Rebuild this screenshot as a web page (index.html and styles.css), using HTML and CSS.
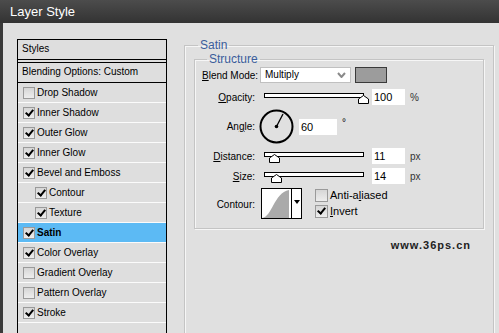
FILE: index.html
```html
<!DOCTYPE html>
<html lang="en">
<head>
    <meta charset="UTF-8">
    <title>Layer Style</title>
    <link rel="stylesheet" href="styles.css">
</head>
<body>
    <div class="window">
        <div class="titlebar">Layer Style</div>

        <div class="content">
            <div class="styles-panel">
                <div class="panel-head">Styles</div>
                <div class="panel-blend">Blending Options: Custom</div>

                <div class="item"><span class="cb"></span>Drop Shadow</div>
                <div class="item"><span class="cb on"></span>Inner Shadow</div>
                <div class="item"><span class="cb on"></span>Outer Glow</div>
                <div class="item"><span class="cb on"></span>Inner Glow</div>
                <div class="item"><span class="cb on"></span>Bevel and Emboss</div>
                <div class="item sub"><span class="cb on"></span>Contour</div>
                <div class="item sub"><span class="cb on"></span>Texture</div>
                <div class="item active"><span class="cb on"></span>Satin</div>
                <div class="item"><span class="cb on"></span>Color Overlay</div>
                <div class="item"><span class="cb"></span>Gradient Overlay</div>
                <div class="item"><span class="cb"></span>Pattern Overlay</div>
                <div class="item"><span class="cb on"></span>Stroke</div>
            </div>

            <fieldset class="group satin">
                <legend>Satin</legend>

                <fieldset class="group structure">
                    <legend>Structure</legend>

                    <div class="row r-blend">
                        <span class="label"><u>B</u>lend Mode:</span>
                        <div class="select">Multiply
                            <svg class="chev" width="9" height="6" viewBox="0 0 9 6"><path d="M1 1 L4.5 5 L8 1" fill="none" stroke="#8a8a8a" stroke-width="2"/></svg>
                        </div>
                        <span class="swatch"></span>
                    </div>

                    <div class="row r-opacity">
                        <span class="label"><u>O</u>pacity:</span>
                        <div class="slider">
                            <div class="track"></div>
                            <svg class="thumb" style="left: 94px" width="11" height="9" viewBox="0 0 11 9"><polygon points="0.5,8.5 0.5,4 5.5,0.5 10.5,4 10.5,8.5" fill="#fff" stroke="#000"/></svg>
                        </div>
                        <span class="field">100</span>
                        <span class="unit">%</span>
                    </div>

                    <div class="row r-angle">
                        <span class="label">An<u>g</u>le:</span>
                        <svg class="dial" width="35" height="35" viewBox="0 0 35 35">
                            <circle cx="17.5" cy="17.5" r="16" fill="none" stroke="#000" stroke-width="2"/>
                            <line x1="17.5" y1="17.5" x2="24" y2="5" stroke="#000" stroke-width="1.3"/>
                            <circle cx="17.5" cy="17.5" r="1.8" fill="#000"/>
                        </svg>
                        <span class="field wide">60</span>
                        <span class="deg">°</span>
                    </div>

                    <div class="row r-dist">
                        <span class="label"><u>D</u>istance:</span>
                        <div class="slider">
                            <div class="track"></div>
                            <svg class="thumb" style="left: 5px" width="11" height="9" viewBox="0 0 11 9"><polygon points="0.5,8.5 0.5,4 5.5,0.5 10.5,4 10.5,8.5" fill="#fff" stroke="#000"/></svg>
                        </div>
                        <span class="field">11</span>
                        <span class="unit">px</span>
                    </div>

                    <div class="row r-size">
                        <span class="label"><u>S</u>ize:</span>
                        <div class="slider">
                            <div class="track"></div>
                            <svg class="thumb" style="left: 7px" width="11" height="9" viewBox="0 0 11 9"><polygon points="0.5,8.5 0.5,4 5.5,0.5 10.5,4 10.5,8.5" fill="#fff" stroke="#000"/></svg>
                        </div>
                        <span class="field">14</span>
                        <span class="unit">px</span>
                    </div>

                    <div class="row r-contour">
                        <span class="label">Contour:</span>
                        <div class="contour">
                            <svg class="curve" width="29" height="29" viewBox="0 0 29 29">
                                <rect width="29" height="29" fill="#fff"/>
                                <path d="M0 29 C 10 28, 12 4, 27 1 L 27 29 Z" fill="#aaa"/>
                            </svg>
                            <span class="contour-arrow"></span>
                        </div>
                        <div class="checks">
                            <div class="check"><span class="cb"></span>Anti-a<u>l</u>iased</div>
                            <div class="check"><span class="cb on"></span><u>I</u>nvert</div>
                        </div>
                    </div>
                </fieldset>

                <div class="watermark">www.36ps.cn</div>
            </fieldset>
        </div>
    </div>
</body>
</html>
```

FILE: styles.css
```css
body {
    margin: 0;
    font-family: "Liberation Sans", Arial, sans-serif;
    font-size: 10px;
    color: #000;
    background-color: #e0e0e0;
}

.window {
    width: 499px;
    height: 333px;
    overflow: hidden;
}

.titlebar {
    height: 23px;
    padding-left: 10px;
    line-height: 24px;
    font-size: 13px;
    color: #fff;
    background: linear-gradient(#4c4c4c, #333);
}

.content {
    display: flex;
    align-items: flex-start;
    height: 310px;
    padding: 16px 0 0 14px;
    border-left: 3px solid #3a3a3a;
    box-sizing: border-box;
}

/* left list */

.styles-panel {
    width: 148px;
    height: 320px;
    flex-shrink: 0;
    border: 1px solid #000;
    background-color: #dedede;
}

.panel-head {
    height: 19px;
    line-height: 18px;
    padding-left: 4px;
    border-bottom: 1px solid #000;
}

.panel-blend {
    height: 19px;
    line-height: 18px;
    margin-top: 2px;
    padding-left: 4px;
    border-top: 1px solid #000;
    border-bottom: 1px solid #000;
}

.item {
    display: flex;
    align-items: center;
    height: 19px;
    padding-left: 5px;
    border-bottom: 1px solid #fbfbfb;
}

.item.sub {
    padding-left: 17px;
}

.item.active {
    background-color: #5cbaf4;
    font-weight: bold;
}

.cb {
    position: relative;
    width: 10px;
    height: 10px;
    margin-right: 2px;
    flex-shrink: 0;
    border: 1px solid #9a9a9a;
    background: linear-gradient(#d6d6d6, #ededed);
}

.cb.on::after {
    content: "";
    position: absolute;
    left: 3px;
    top: 0;
    width: 3px;
    height: 6px;
    border-right: 2px solid #000;
    border-bottom: 2px solid #000;
    transform: rotate(40deg);
}

/* group boxes */

.group {
    margin: 0;
    padding: 0;
    border: 1px solid #c4c4c4;
    box-shadow: inset 1px 1px 0 #f6f6f6, 1px 1px 0 #f6f6f6;
}

.group legend {
    margin-left: 13px;
    padding: 0 2px;
    line-height: 13px;
    font-size: 12px;
    color: #3a5d9c;
}

.satin {
    width: 308px;
    height: 320px;
    margin-left: 17px;
    margin-top: 0;
}

.structure {
    margin: 1px 9px 0 9px;
    padding: 1px 0 7px 7px;
}

.structure legend {
    margin-left: 5px;
}

.row {
    display: flex;
    align-items: center;
}

.label {
    width: 53px;
    margin-right: 5px;
    flex-shrink: 0;
    text-align: right;
    white-space: nowrap;
}

.r-opacity { margin-top: 6px; }
.r-angle { margin-top: 4px; }
.r-dist { margin-top: 4px; }
.r-size { margin-top: 4px; }
.r-contour { margin-top: 4px; align-items: flex-start; }
.r-contour .label { margin-top: 11px; }

.select {
    position: relative;
    width: 85px;
    height: 14px;
    padding-left: 4px;
    line-height: 14px;
    border: 1px solid #c0c0c0;
    background-color: #fff;
}

.chev {
    position: absolute;
    right: 4px;
    top: 4px;
}

.swatch {
    width: 30px;
    height: 14px;
    margin-left: 4px;
    border: 1px solid #3a3a3a;
    background-color: #9c9c9c;
}

.slider {
    position: relative;
    width: 100px;
    height: 16px;
    margin-left: 4px;
}

.track {
    height: 3px;
    margin-top: 4px;
    border: 1px solid #000;
    background-color: #fff;
}

.thumb {
    position: absolute;
    top: 6px;
}

.field {
    width: 31px;
    height: 16px;
    margin-left: 8px;
    padding-left: 2px;
    line-height: 16px;
    font-size: 11px;
    background-color: #fff;
}

.field.wide {
    width: 36px;
    margin-left: 5px;
}

.unit {
    margin-left: 5px;
    color: #333;
}

.deg {
    align-self: flex-start;
    margin-top: 8px;
    margin-left: 5px;
    font-size: 10px;
}

.dial {
    margin-left: -1px;
}

.contour {
    display: flex;
    width: 39px;
    height: 29px;
    margin-left: 1px;
    border: 1px solid #000;
    background-color: #fff;
}

.contour-arrow {
    position: relative;
    width: 9px;
    border-left: 1px solid #000;
    background-color: #fff;
}

.contour-arrow::after {
    content: "";
    position: absolute;
    left: 2px;
    top: 11px;
    border-left: 3px solid transparent;
    border-right: 3px solid transparent;
    border-top: 4px solid #000;
}

.checks {
    margin-left: 13px;
    margin-top: 1px;
}

.check {
    display: flex;
    align-items: center;
    height: 12px;
    margin-bottom: 4px;
    font-size: 11px;
}

.check .cb {
    width: 11px;
    height: 11px;
}

.watermark {
    margin-top: 10px;
    padding-right: 22px;
    text-align: right;
    font-weight: bold;
    font-size: 11px;
    letter-spacing: 1px;
    color: #222;
}
```
